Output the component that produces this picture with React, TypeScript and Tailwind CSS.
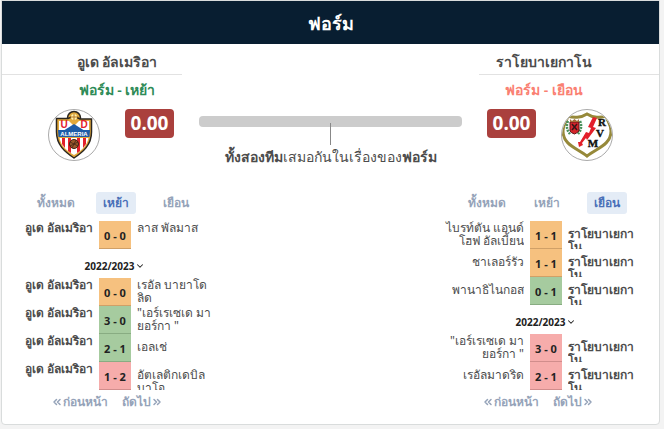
import { ChevronDown, ChevronsLeft, ChevronsRight } from 'lucide-react';

type Result = 'draw' | 'win' | 'loss';
type Match = { home: string[]; score: string; away: string[]; result: Result; homeClass: string; awayClass: string };
type Group = { season?: string; matches: Match[] };

const ALM = 'อูเด อัลเมริอา';
const RAYO = ['ราโยบาเยกา', 'โน'];
const own = 'font-semibold';

const almeria: Group[] = [
  { matches: [{ home: [ALM], score: '0 - 0', away: ['ลาส พัลมาส'], result: 'draw', homeClass: own, awayClass: '' }] },
  {
    season: '2022/2023',
    matches: [
      { home: [ALM], score: '0 - 0', away: ['เรอัล บายาโด', 'ลิด'], result: 'draw', homeClass: own, awayClass: '' },
      { home: [ALM], score: '3 - 0', away: ['"เอร์เรเซเด มา', 'ยอร์กา "'], result: 'win', homeClass: own, awayClass: '' },
      { home: [ALM], score: '2 - 1', away: ['เอลเช่'], result: 'win', homeClass: own, awayClass: 'pt-[6px]' },
      { home: [ALM], score: '1 - 2', away: ['อัตเลติกเดบิล', 'บาโอ'], result: 'loss', homeClass: own, awayClass: 'pt-[6px]' },
    ],
  },
];

const rayo: Group[] = [
  {
    matches: [
      { home: ['ไบรท์ตัน แอนด์', 'โฮฟ อัลเบี้ยน'], score: '1 - 1', away: RAYO, result: 'draw', homeClass: '', awayClass: 'font-semibold pt-[6px]' },
      { home: ['ชาเลอร์รัว'], score: '1 - 1', away: RAYO, result: 'draw', homeClass: 'pt-[6px]', awayClass: 'font-semibold pt-[6px]' },
      { home: ['พานาธิไนกอส'], score: '0 - 1', away: RAYO, result: 'win', homeClass: 'pt-[6px]', awayClass: 'font-semibold pt-[6px]' },
    ],
  },
  {
    season: '2022/2023',
    matches: [
      { home: ['"เอร์เรเซเด มา', 'ยอร์กา "'], score: '3 - 0', away: RAYO, result: 'loss', homeClass: '', awayClass: 'font-semibold pt-[6px]' },
      { home: ['เรอัลมาดริด'], score: '2 - 1', away: RAYO, result: 'loss', homeClass: 'pt-[6px]', awayClass: 'font-semibold pt-[6px]' },
    ],
  },
];

const resultClass: Record<Result, string> = {
  draw: 'bg-[#f6c17f] border-[#d0a067]',
  win: 'bg-[#a6cb9f] border-[#88ac82]',
  loss: 'bg-[#f6acab] border-[#d18d8c]',
};

function AlmeriaCrest() {
  return (
    <svg viewBox="0 0 52 52" className="size-[52px]" role="img" aria-label="UD Almería">
      <circle cx="26" cy="26" r="25.5" fill="#fff" stroke="#aaa" />
      <circle cx="26" cy="9" r="6.5" fill="#e2a93b" stroke="#2b2620" strokeWidth="1.5" />
      <path d="M8.500 9.500H20L26 7L32 10H43.500V23C43.500 36 35 43 26 49C17 43 8.500 36 8.500 23Z" fill="#e2a93b" stroke="#2b2620" strokeWidth="1.5" />
      <path d="M11 12H21L26 17L31 12H41V22H11Z" fill="#fff" />
      <path d="M26 15L37 22H15Z" fill="#1d5ca8" />
      <path d="M11.500 29H40.500C39 37 33 42 26 46C19 42 13 37 11.500 29Z" fill="#fff" />
      <path d="M14 29H17V39L14 35ZM20 29H23V44L20 42ZM29 29H32V42L29 44ZM35 29H38V35L35 39Z" fill="#e3202b" />
      <path d="M10 21H42L41.500 28H10.500Z" fill="#1d5ca8" />
      <circle cx="26" cy="8" r="3" fill="#fff3b0" />
      <path d="M26 5V11M22 8H30" stroke="#b87920" />
      <circle cx="26" cy="35" r="4.5" fill="#9b5a2c" stroke="#422315" />
      <path d="M22 33L30 37M24 39L28 31M22 37L30 33" stroke="#422315" strokeWidth=".8" />
      <text x="16" y="19" textAnchor="middle" className="font-['Liberation_Sans'] text-[10px] font-bold" fill="#e3202b">U</text>
      <text x="36" y="19" textAnchor="middle" className="font-['Liberation_Sans'] text-[10px] font-bold" fill="#e3202b">D</text>
      <text x="26" y="27" textAnchor="middle" className="font-['Liberation_Sans'] text-[6px] font-bold" fill="#fff">ALMERIA</text>
    </svg>
  );
}

function RayoCrest() {
  return (
    <svg viewBox="0 0 52 52" className="size-[52px]" role="img" aria-label="Rayo Vallecano">
      <defs>
        <clipPath id="rayo-circle"><circle cx="26" cy="26" r="25" /></clipPath>
      </defs>
      <circle cx="26" cy="26" r="25.5" fill="#fff" />
      <g clipPath="url(#rayo-circle)">
        <path d="M26 5C20 9 12 9 7 7C6 12 2 15 2 22C2 36 16 39 26 47C36 39 50 36 50 22C50 15 46 12 45 7C40 9 32 9 26 5Z" fill="#fff" stroke="#96893a" strokeWidth="3" />
        <path d="M7 12Q4 19 9 25M19 12Q22 19 17 25" fill="none" stroke="#49915c" strokeWidth="2.5" strokeDasharray="2 1" />
        <path d="M9 13H18V22Q16 24 13.500 25Q10 24 9 22Z" fill="#d6252b" stroke="#5c171b" />
        <path d="M11 15L16 21M16 15L11 21" stroke="#35151a" strokeWidth="1.5" />
        <path d="M9 10L11 12L13.500 10L16 12L18 10V13H9Z" fill="#a66e3b" />
        <path d="M32 8L36 9L32 18L35 19L26 31L25 29L21 34L22 36L18 38L17 33L19 33L25 23L28 24L30 19L27 18Z" fill="#e3202b" />
      </g>
      <circle cx="26" cy="26" r="25.5" fill="none" stroke="#aaa" />
      <text x="41" y="17" textAnchor="middle" className="font-['Liberation_Serif'] text-[11px] font-bold" fill="#111" stroke="#111" strokeWidth=".4">R</text>
      <text x="39" y="28" textAnchor="middle" className="font-['Liberation_Serif'] text-[11px] font-bold" fill="#111" stroke="#111" strokeWidth=".4">V</text>
      <text x="32" y="38" textAnchor="middle" className="font-['Liberation_Serif'] text-[11px] font-bold" fill="#111" stroke="#111" strokeWidth=".4">M</text>
    </svg>
  );
}

function Rating() {
  return <span className="flex h-[29px] w-[49px] items-center justify-center rounded bg-[#aa403d] text-[19px] font-bold text-white">0.00</span>;
}

function Tabs({ active }: { active: number }) {
  return (
    <div role="tablist" className="flex h-[22px] justify-center gap-5 pl-px text-xs font-semibold">
      {['ทั้งหมด', 'เหย้า', 'เยือน'].map((label, i) => (
        <button
          key={label}
          type="button"
          role="tab"
          aria-selected={i === active}
          className={i === active ? 'w-10 rounded-[3px] bg-[#e4ecf6] text-[#4a70b8]' : 'w-10 whitespace-nowrap text-[#95a3b9]'}
        >
          {label}
        </button>
      ))}
    </div>
  );
}

function Lines({ lines }: { lines: string[] }) {
  return <>{lines.map((line) => <span key={line} className="block whitespace-nowrap">{line}</span>)}</>;
}

function Results({ groups, active }: { groups: Group[]; active: number }) {
  return (
    <div className="w-[226px]">
      <Tabs active={active} />
      <table className="mt-[7px] w-full table-fixed border-collapse text-xs leading-[13px]">
        <colgroup>
          <col />
          <col className="w-8" />
          <col />
        </colgroup>
        {groups.map((group, g) => (
          <tbody key={g}>
            {group.season && (
              <tr>
                <th colSpan={3} className="h-[29px] p-0 pt-1">
                  <button type="button" className="inline-flex items-center gap-px text-[10px] font-bold text-[#222]">
                    {group.season}
                    <ChevronDown className="size-[10px]" strokeWidth={2.5} />
                  </button>
                </th>
              </tr>
            )}
            {group.matches.map((m, i) => (
              <tr key={i}>
                <td className="p-0 pr-[6px] text-right align-top">
                  <div className={`h-7 overflow-hidden ${m.homeClass}`}><Lines lines={m.home} /></div>
                </td>
                <td className="p-0">
                  <div className={`flex h-7 items-center justify-center border-b pt-px text-[11px] font-bold text-[#222] ${resultClass[m.result]}`}>{m.score}</div>
                </td>
                <td className="p-0 pl-[6px] align-top">
                  <div className={`h-7 overflow-hidden ${m.awayClass}`}><Lines lines={m.away} /></div>
                </td>
              </tr>
            ))}
          </tbody>
        ))}
      </table>
      <div className="flex h-6 items-center justify-center gap-[14px] pr-4 text-xs font-semibold text-[#95a3b9]">
        <button type="button" className="flex items-center"><ChevronsLeft className="size-3" strokeWidth={3} />ก่อนหน้า</button>
        <button type="button" className="flex items-center">ถัดไป<ChevronsRight className="size-3" strokeWidth={3} /></button>
      </div>
    </div>
  );
}

export default function App() {
  return (
    <div className="min-h-screen bg-[#f3f3f3] pr-1 pl-px font-['Noto_Sans','Open_Sans',sans-serif] text-[#4c4c4c]">
      <section className="rounded-b border border-[#d9dcdc] bg-white pb-[10px]">
        <h2 className="flex h-[43px] items-center justify-center bg-[#081e31] text-lg font-semibold text-white">ฟอร์ม</h2>
        <div className="flex h-[148px] justify-between pt-[6px]">
          <div className="w-[180px]">
            <h3 className="flex h-[25px] items-center justify-center border-b border-[#e2e2e2] pl-[50px] text-sm font-semibold">อูเด อัลเมริอา</h3>
            <p className="flex h-[34px] items-center justify-center pb-1 pl-[50px] text-sm font-semibold text-[#2e8b57]">ฟอร์ม - เหย้า</p>
            <div className="flex items-start justify-end gap-[25px] pr-2"><AlmeriaCrest /><Rating /></div>
          </div>
          <div className="flex flex-1 flex-col items-center px-[17px] pt-[66px]">
            <div className="flex h-[11px] w-full justify-center rounded bg-[#ccc] pt-[7px]">
              <div className="h-[22px] w-px shrink-0 bg-[#888]" />
            </div>
            <p className="mt-5 text-sm leading-5 whitespace-nowrap"><b className="font-semibold">ทั้งสองทีม</b>เสมอกันในเรื่องของ<b className="font-semibold">ฟอร์ม</b></p>
          </div>
          <div className="w-[180px]">
            <h3 className="flex h-[25px] items-center justify-center border-b border-[#e2e2e2] pr-[50px] text-sm font-semibold">ราโยบาเยกาโน</h3>
            <p className="flex h-[34px] items-center justify-center pr-[50px] pb-1 text-sm font-semibold text-[#fa8072]">ฟอร์ม - เยือน</p>
            <div className="flex items-start gap-[25px] pl-2"><Rating /><RayoCrest /></div>
          </div>
        </div>
        <div className="flex justify-between">
          <Results groups={almeria} active={1} />
          <Results groups={rayo} active={2} />
        </div>
      </section>
    </div>
  );
}
